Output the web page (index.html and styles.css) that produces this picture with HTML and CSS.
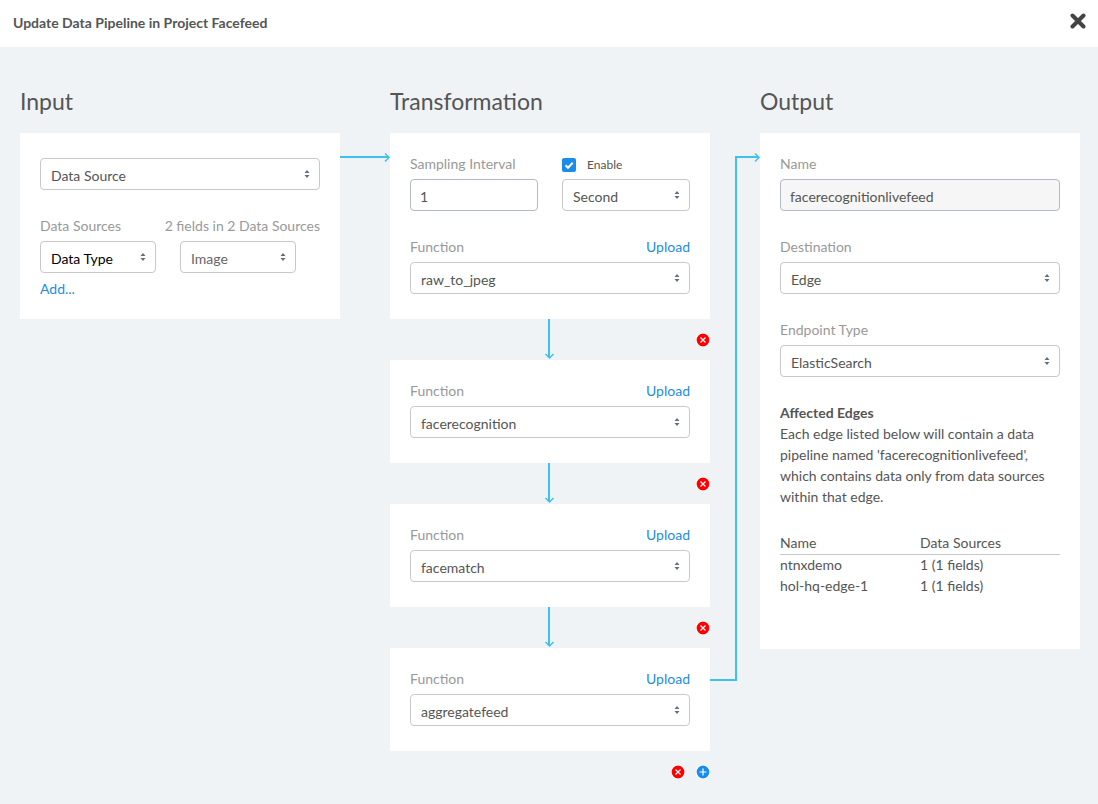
FILE: index.html
```html
<!DOCTYPE html>
<html lang="en">
<head>
<meta charset="utf-8">
<title>Update Data Pipeline</title>
<link rel="stylesheet" href="styles.css">
</head>
<body>
<svg class="symbols" aria-hidden="true">
  <symbol id="caret" viewBox="0 0 6 8"><path d="M3 0 5.5 3h-5zM3 8 .5 5h5z"/></symbol>
  <symbol id="down" viewBox="0 0 10 41"><path d="M4 0v38" stroke-width="2"/><path d="M0.5 35 4.5 39 8.500 35" stroke-width="1.500"/></symbol>
  <symbol id="remove" viewBox="0 0 14 14"><circle cx="7" cy="7" r="7" fill="#f00"/><path d="m4.500 4.500 5 5m0-5-5 5"/></symbol>
  <symbol id="add" viewBox="0 0 14 14"><circle cx="7" cy="7" r="7" fill="#1a8cec"/><path d="M7 3.500v7M3.500 7h7"/></symbol>
</svg>

<header class="topbar">
  <h1 class="title">Update Data Pipeline in Project Facefeed</h1>
  <button class="icon-button" type="button" aria-label="Close">
    <svg class="close-icon" viewBox="0 0 16 16"><path d="m2.500 2.500 11 11m0-11-11 11"/></svg>
  </button>
</header>

<main class="pipeline">
  <section class="stage">
    <h2 class="heading">Input</h2>
    <div class="card card-input">
      <div class="select">
        <select aria-label="Input kind"><option>Data Source</option></select>
        <svg class="caret"><use href="#caret"/></svg>
      </div>
      <div class="field">
        <div class="label-row">
          <label class="label" for="data-type">Data Sources</label>
          <span class="label">2 fields in 2 Data Sources</span>
        </div>
        <div class="pair pair-inset">
          <div class="select">
            <select class="strong" id="data-type"><option>Data Type</option></select>
            <svg class="caret"><use href="#caret"/></svg>
          </div>
          <div class="select">
            <select class="muted" aria-label="Data type value"><option>Image</option></select>
            <svg class="caret"><use href="#caret"/></svg>
          </div>
        </div>
      </div>
      <a class="link add-link" href="#">Add...</a>
    </div>
  </section>

  <div class="link-across">
    <div class="wire-top"><svg class="head" viewBox="0 0 6 10"><path d="m1 1.500 4 4-4 4"/></svg></div>
  </div>

  <section class="stage">
    <h2 class="heading">Transformation</h2>
    <div class="card">
      <div class="pair">
        <div class="field">
          <div class="label-row"><label class="label" for="interval">Sampling Interval</label></div>
          <input class="textbox" id="interval" type="text" value="1">
        </div>
        <div class="field">
          <div class="label-row">
            <label class="check"><input type="checkbox" checked><svg class="tick" viewBox="0 0 14 14"><path d="m3.500 7.200 2.500 2.500 4.700-5"/></svg>Enable</label>
          </div>
          <div class="select">
            <select aria-label="Interval unit"><option>Second</option></select>
            <svg class="caret"><use href="#caret"/></svg>
          </div>
        </div>
      </div>
      <div class="field">
        <div class="label-row"><label class="label" for="fn1">Function</label><a class="link" href="#">Upload</a></div>
        <div class="select">
          <select id="fn1"><option>raw_to_jpeg</option></select>
          <svg class="caret"><use href="#caret"/></svg>
        </div>
      </div>
    </div>

    <div class="step-row">
      <svg class="down"><use href="#down"/></svg>
      <div class="actions"><button class="icon-button" type="button" aria-label="Remove"><svg class="badge"><use href="#remove"/></svg></button></div>
    </div>
    <div class="card">
      <div class="field">
        <div class="label-row"><label class="label" for="fn2">Function</label><a class="link" href="#">Upload</a></div>
        <div class="select">
          <select id="fn2"><option>facerecognition</option></select>
          <svg class="caret"><use href="#caret"/></svg>
        </div>
      </div>
    </div>

    <div class="step-row">
      <svg class="down"><use href="#down"/></svg>
      <div class="actions"><button class="icon-button" type="button" aria-label="Remove"><svg class="badge"><use href="#remove"/></svg></button></div>
    </div>
    <div class="card">
      <div class="field">
        <div class="label-row"><label class="label" for="fn3">Function</label><a class="link" href="#">Upload</a></div>
        <div class="select">
          <select id="fn3"><option>facematch</option></select>
          <svg class="caret"><use href="#caret"/></svg>
        </div>
      </div>
    </div>

    <div class="step-row">
      <svg class="down"><use href="#down"/></svg>
      <div class="actions"><button class="icon-button" type="button" aria-label="Remove"><svg class="badge"><use href="#remove"/></svg></button></div>
    </div>
    <div class="card">
      <div class="field">
        <div class="label-row"><label class="label" for="fn4">Function</label><a class="link" href="#">Upload</a></div>
        <div class="select">
          <select id="fn4"><option>aggregatefeed</option></select>
          <svg class="caret"><use href="#caret"/></svg>
        </div>
      </div>
    </div>

    <div class="step-row">
      <div class="actions">
        <button class="icon-button" type="button" aria-label="Remove"><svg class="badge"><use href="#remove"/></svg></button>
        <button class="icon-button" type="button" aria-label="Add function"><svg class="badge"><use href="#add"/></svg></button>
      </div>
    </div>
  </section>

  <div class="link-across link-elbow">
    <div class="wire-rise"></div>
    <div class="wire-top"><svg class="head" viewBox="0 0 6 10"><path d="m1 1.500 4 4-4 4"/></svg></div>
  </div>

  <section class="stage">
    <h2 class="heading">Output</h2>
    <div class="card card-output">
      <div class="field">
        <div class="label-row"><label class="label" for="name">Name</label></div>
        <input class="textbox" id="name" type="text" value="facerecognitionlivefeed" disabled>
      </div>
      <div class="field">
        <div class="label-row"><label class="label" for="destination">Destination</label></div>
        <div class="select">
          <select id="destination"><option>Edge</option></select>
          <svg class="caret"><use href="#caret"/></svg>
        </div>
      </div>
      <div class="field">
        <div class="label-row"><label class="label" for="endpoint">Endpoint Type</label></div>
        <div class="select">
          <select id="endpoint"><option>ElasticSearch</option></select>
          <svg class="caret"><use href="#caret"/></svg>
        </div>
      </div>
      <div class="affected">
        <h3 class="subheading">Affected Edges</h3>
        <p class="note">Each edge listed below will contain a data pipeline named 'facerecognitionlivefeed', which contains data only from data sources within that edge.</p>
        <table class="edges">
          <thead><tr><th>Name</th><th>Data Sources</th></tr></thead>
          <tbody>
            <tr><td>ntnxdemo</td><td>1 (1 fields)</td></tr>
            <tr><td>hol-hq-edge-1</td><td>1 (1 fields)</td></tr>
          </tbody>
        </table>
      </div>
    </div>
  </section>
</main>
</body>
</html>
```
FILE: styles.css
```css
* { box-sizing: border-box; }

body {
  margin: 0;
  min-height: 100vh;
  background: #eff3f6;
  color: #555;
  font: 14px/21px Lato, "Open Sans", sans-serif;
}

input, select, button { font: inherit; color: inherit; }

.symbols { display: none; }

.topbar {
  display: flex;
  align-items: center;
  justify-content: space-between;
  height: 47px;
  padding: 0 12px 5px 13px;
  background: #fff;
}

.title { margin: 0; padding-top: 3px; font-size: 14px; font-weight: 700; line-height: 21px; }

.icon-button {
  display: flex;
  padding: 0;
  border: 0;
  background: none;
  cursor: pointer;
}

.close-icon { width: 16px; height: 16px; fill: none; stroke: #444; stroke-width: 4; stroke-linecap: round; }

.pipeline {
  display: grid;
  grid-template-columns: minmax(0, 1fr) 50px minmax(0, 1fr) 50px minmax(0, 1fr);
  padding: 39px 18px 12px 20px;
}

.heading { margin: 0 0 17px; font-size: 23px; font-weight: 400; line-height: 30px; }

.card { padding: 21px 20px 25px; background: #fff; }
.card-input { padding: 25px 20px 20px; }
.card-output { padding-bottom: 53px; }

.field + .field, .select + .field, .pair + .field { margin-top: 26px; }
.pair > .field + .field { margin-top: 0; }

.pair { display: grid; grid-template-columns: 1fr 1fr; gap: 24px; }
.pair-inset { padding-right: 24px; }

.label-row {
  display: flex;
  align-items: center;
  justify-content: space-between;
  height: 19px;
  margin-bottom: 6px;
}

.label { color: #999; }
.link { color: #1a8cec; text-decoration: none; }
.add-link { display: block; margin-top: 5px; }

.textbox, .select select {
  display: block;
  width: 100%;
  height: 32px;
  margin: 0;
  border: 1px solid #c8c8cb;
  border-radius: 4px;
  background: #fff;
}

.textbox { padding: 2px 9px 0; border-color: #b4b9ca; }
.textbox:disabled { background: #f6f6f6; }

.select { position: relative; }
.select select { padding: 3px 24px 0 10px; appearance: none; }
.select .strong { color: #000; }
.select .muted { color: #666; }

.caret {
  position: absolute;
  top: 12px;
  right: 10px;
  width: 6px;
  height: 8px;
  fill: #5f6f81;
  pointer-events: none;
}

.check { position: relative; display: flex; align-items: center; gap: 11px; padding-top: 2px; font-size: 12px; }
.check input {
  width: 14px;
  height: 14px;
  margin: 0;
  border-radius: 2px;
  background: #1a8cec;
  appearance: none;
}
.tick { position: absolute; left: 0; width: 14px; height: 14px; fill: none; stroke: #fff; stroke-width: 2; }
.check input:not(:checked) + .tick { display: none; }

.step-row { display: grid; grid-template-columns: 1fr 10px 1fr; align-items: center; height: 41px; }
.down { grid-column: 2; width: 10px; height: 41px; fill: none; stroke: #3fc1ef; }
.actions { display: flex; grid-column: 3; justify-content: flex-end; gap: 11px; }
.badge { width: 14px; height: 14px; fill: none; stroke: #fff; stroke-width: 1.2; }

/* Wires start level with the first control of each card. */
.link-across { margin-top: 70px; }
.wire-top { position: relative; height: 2px; margin-right: 1px; background: #3fc1ef; }
.head { position: absolute; top: -4px; right: -1px; width: 6px; height: 10px; fill: none; stroke: #3fc1ef; stroke-width: 1.5; }

.link-elbow { display: grid; grid-template-columns: 27px 1fr; margin-bottom: 111px; }
.wire-rise { border: solid #3fc1ef; border-width: 0 2px 2px 0; }

.subheading { margin: 26px 0 0; font-size: 14px; font-weight: 700; line-height: 20px; }
.note { margin: 0 0 26px; }

.edges { width: 100%; border-collapse: collapse; table-layout: fixed; }
.edges th, .edges td { height: 21px; padding: 0; font-weight: 400; line-height: 20px; text-align: left; }
.edges th { border-bottom: 1px solid #c8c8cb; }
```
